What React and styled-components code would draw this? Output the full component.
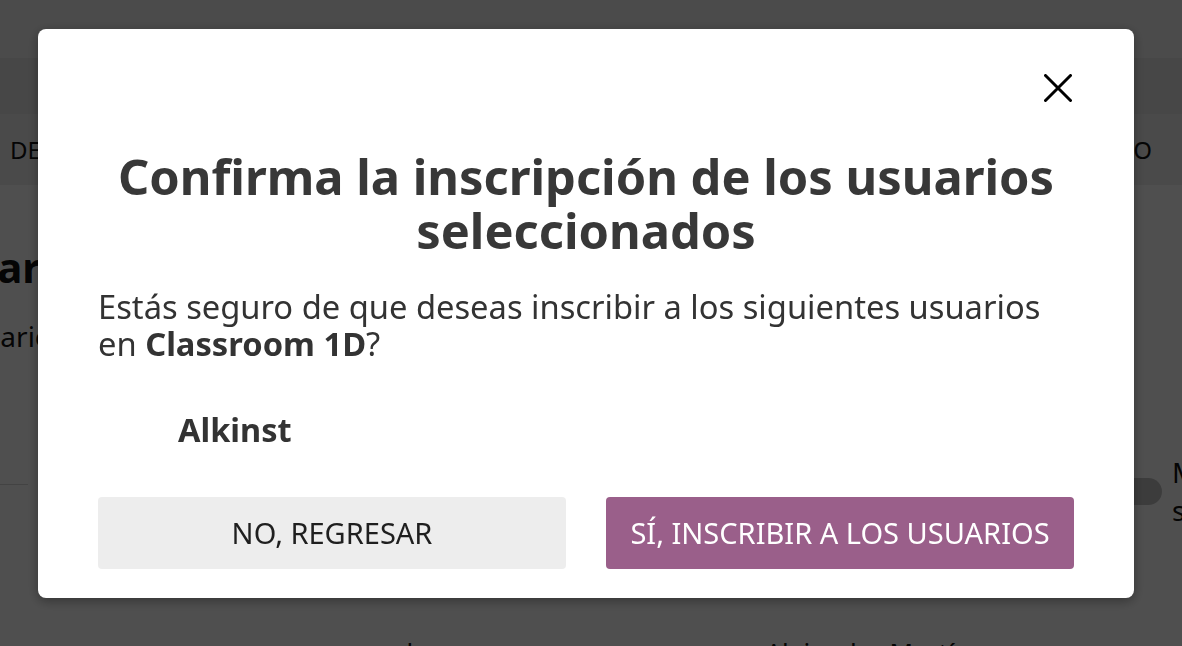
import React from "react";
import styled, { createGlobalStyle } from "styled-components";

const GlobalStyle = createGlobalStyle`
  html, body {
    margin: 0;
    padding: 0;
    background: #ffffff;
    font-family: "Noto Sans", "Open Sans", sans-serif;
    overflow: hidden;
  }
`;

const Page = styled.div`
  width: 1182px;
  height: 646px;
  overflow: hidden;
  background: #ffffff;
  color: #111;
`;

const TopBar = styled.div`
  height: 58px;
  background: #f2f2f2;
`;

const SubBar = styled.div`
  height: 56px;
  background: #e6e6e6;
`;

const Tabs = styled.nav`
  height: 71px;
  background: #efefef;
  display: flex;
  align-items: center;
  justify-content: space-between;
  padding: 0 30px 0 10px;
  font-size: 24px;
  color: #111;
`;

const Tab = styled.span`
  text-transform: uppercase;
`;

// the page behind the dialog is scrolled a bit to the right
const Body = styled.main`
  padding: 54px 0 0 0;
`;

const PageTitle = styled.h1`
  margin: 0 0 0 -128px;
  font-size: 42px;
  font-weight: 700;
  line-height: 56px;
  white-space: nowrap;
`;

const PageSub = styled.p`
  margin: 22px 0 0 -133px;
  font-size: 28px;
  line-height: 38px;
  white-space: nowrap;
`;

const FilterRow = styled.div`
  display: flex;
  align-items: center;
  margin-top: 98px;
`;

const Divider = styled.div`
  height: 1px;
  width: 28px;
  background: #d8d8d8;
  margin-bottom: 13px;
`;

const Spacer = styled.div`
  flex: 1;
`;

const Toggle = styled.div`
  width: 48px;
  height: 27px;
  border-radius: 14px;
  background: #c3c3c3;
  margin-right: 10px;
`;

const ToggleLabel = styled.div`
  font-size: 28px;
  line-height: 38px;
  width: 10px;
  overflow: hidden;
  white-space: nowrap;
`;

const ListRow = styled.div`
  display: flex;
  font-size: 26px;
  line-height: 35px;
  margin-top: 106px;
  padding-left: 392px;
  gap: 280px;
`;

const Overlay = styled.div`
  position: fixed;
  inset: 0;
  background: rgba(0, 0, 0, 0.69);
  padding: 29px 48px 0 38px;
`;

const Modal = styled.div`
  background: #ffffff;
  border-radius: 8px;
  box-shadow: 0 3px 12px rgba(0, 0, 0, 0.35);
  padding: 44px 60px 29px 60px;
  color: #333333;
`;

const CloseRow = styled.div`
  display: flex;
  justify-content: flex-end;
  margin-right: 1px;
`;

const CloseButton = styled.button`
  border: none;
  background: none;
  padding: 0;
  width: 30px;
  height: 30px;
  display: flex;
  align-items: center;
  justify-content: center;
  cursor: pointer;
`;

const Title = styled.h2`
  margin: 46px 0 0 0;
  font-size: 48.8px;
  font-weight: 700;
  line-height: 54px;
  text-align: center;
  color: #383838;
`;

const Message = styled.p`
  margin: 31px 0 0 0;
  font-size: 32.7px;
  line-height: 37px;
  color: #333333;
`;

const UserList = styled.ul`
  list-style: none;
  margin: 49px 0 0 0;
  padding: 0 0 0 80px;
`;

const UserName = styled.li`
  font-size: 32.5px;
  font-weight: 700;
  line-height: 37px;
  color: #333333;
`;

const Actions = styled.div`
  display: grid;
  grid-template-columns: 1fr 1fr;
  gap: 40px;
  margin-top: 49px;
`;

const ActionButton = styled.button`
  height: 72px;
  border: none;
  border-radius: 4px;
  padding: 0 0 2px 0;
  font-family: "Noto Sans", "Open Sans", sans-serif;
  font-size: 29px;
  text-transform: uppercase;
  background: ${(props) => (props.$primary ? "#9a5f8a" : "#ededed")};
  color: ${(props) => (props.$primary ? "#ffffff" : "#1f1f1f")};
  cursor: pointer;
`;

const CloseIcon = () => (
  <svg width="28" height="28" viewBox="0 0 28 28">
    <path d="M1.5 1.5 L26.5 26.5 M26.5 1.5 L1.5 26.5" stroke="#000" strokeWidth="3" strokeLinecap="round" />
  </svg>
);

export default function App() {
  return (
    <>
      <GlobalStyle />
      <Page>
        <TopBar />
        <SubBar />
        <Tabs>
          <Tab>Detalles</Tab>
          <Tab>Inscrito</Tab>
        </Tabs>
        <Body>
          <PageTitle>Agregar usuarios</PageTitle>
          <PageSub>Busca usuarios para inscribirlos</PageSub>
          <FilterRow>
            <Divider />
            <Spacer />
            <Toggle />
            <ToggleLabel>
              M<br />s
            </ToggleLabel>
          </FilterRow>
          <ListRow>
            <span>alumno</span>
            <span>Alejandro Martínez</span>
          </ListRow>
        </Body>
        <Overlay>
          <Modal role="dialog" aria-modal="true">
            <CloseRow>
              <CloseButton aria-label="Cerrar">
                <CloseIcon />
              </CloseButton>
            </CloseRow>
            <Title>Confirma la inscripción de los usuarios seleccionados</Title>
            <Message>
              Estás seguro de que deseas inscribir a los siguientes usuarios en <strong>Classroom 1D</strong>?
            </Message>
            <UserList>
              <UserName>Alkinst</UserName>
            </UserList>
            <Actions>
              <ActionButton>No, regresar</ActionButton>
              <ActionButton $primary>Sí, inscribir a los usuarios</ActionButton>
            </Actions>
          </Modal>
        </Overlay>
      </Page>
    </>
  );
}
